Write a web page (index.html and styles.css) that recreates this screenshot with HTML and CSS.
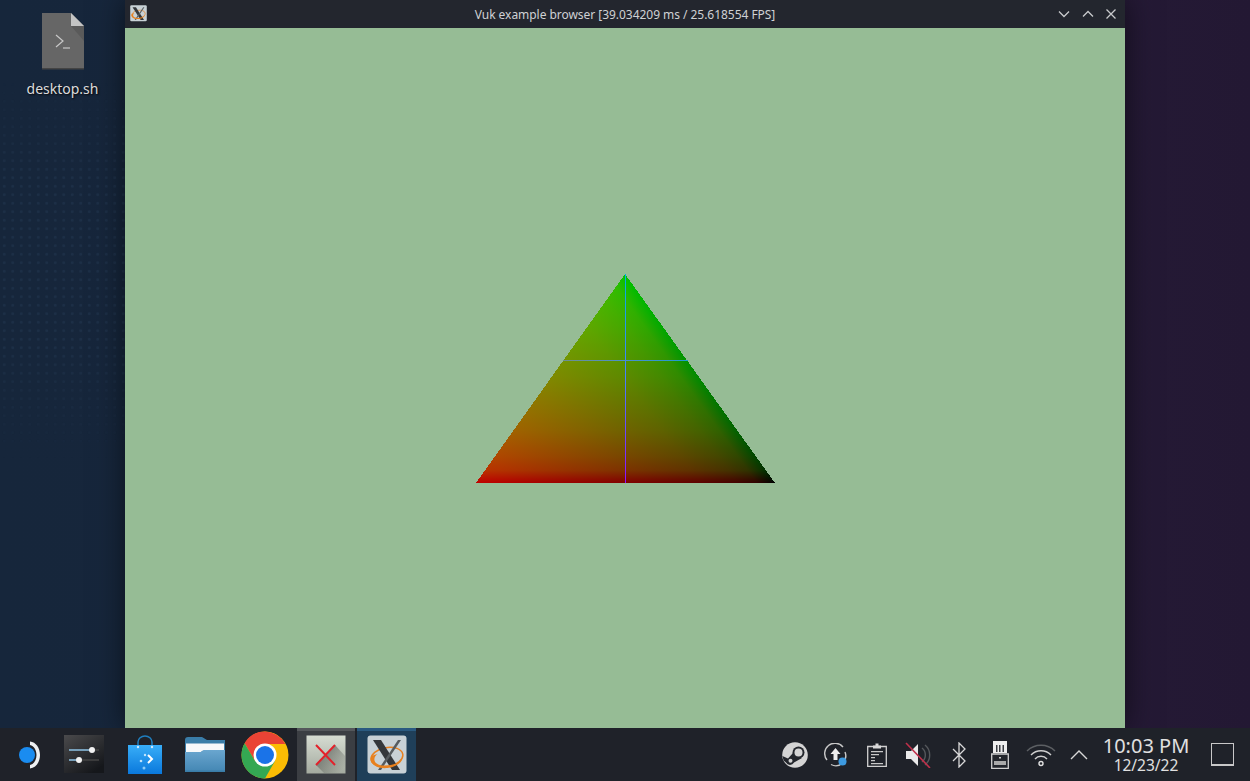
FILE: index.html
```html
<!DOCTYPE html>
<html lang="en">
<head>
  <meta charset="UTF-8" />
  <title>Vuk example browser</title>
  <link rel="stylesheet" href="styles.css">
</head>
<body>
  <!-- shared X server tile, used in the taskbar and on the title bar -->
  <svg class="defs" width="0" height="0">
    <symbol id="xorg" viewBox="0 0 40 40">
      <rect x="0.5" y="0.5" width="39" height="38" rx="3" fill="#c8d1d6" />
      <ellipse cx="20" cy="22" rx="16" ry="9.500" fill="none" stroke="#e8801e" stroke-width="1.500" transform="rotate(-10 20 22)" />
      <path d="M6 5h8l19 30h-8z" fill="#34373b" />
      <path d="M31 5h3L14 35h-3z" fill="#565b5f" />
      <path d="M3.500 24c0 6 8 10 17 9s14-5 15-10c-2 4-8 7-15 7.500s-12-1-13-5c-.5-2.500.5-4.500 3-6.500-4 1-7 2-7 5z" fill="#e8801e" />
    </symbol>
  </svg>

  <main class="desktop">
    <div class="desktop-file">
      <svg class="file-icon" width="44" height="57" viewBox="0 0 44 57">
        <path d="M1 0h29l13 13v43H1z" fill="#666" />
        <path d="M1 55h42v1.500H1z" fill="#444" />
        <path d="M30 13h13v15z" fill="#5a5a5a" />
        <path d="M30 0l13 13H30z" fill="#c4c4c4" />
        <path d="M15 22l7 6-7 6" fill="none" stroke="#c8c8c8" stroke-width="1.200" />
        <path d="M22 35h7" stroke="#c8c8c8" stroke-width="1.200" />
      </svg>
      <span class="file-name">desktop.sh</span>
    </div>

    <section class="window">
      <header class="titlebar">
        <svg class="title-icon" width="17" height="17"><use href="#xorg" /></svg>
        <span class="title-text">Vuk example browser [39.034209 ms / 25.618554 FPS]</span>
        <div class="title-buttons">
          <svg width="12" height="8" viewBox="0 0 12 8"><path d="M1 1.500l5 5 5-5" /></svg>
          <svg width="12" height="8" viewBox="0 0 12 8"><path d="M1 6.500l5-5 5 5" /></svg>
          <svg width="12" height="12" viewBox="0 0 12 12"><path d="M1.500 1.500l9 9M10.500 1.500l-9 9" /></svg>
        </div>
      </header>
      <div class="viewport">
        <svg class="triangle" width="300" height="211" viewBox="0 0 300 211">
          <defs>
            <!-- stops follow the sRGB curve, the app interpolates in linear light -->
            <linearGradient id="red" gradientUnits="userSpaceOnUse" x1="1" y1="210" x2="198.300" y2="68.400">
              <stop offset="0" stop-color="#c00000" />
              <stop offset="0.25" stop-color="#a00000" />
              <stop offset="0.5" stop-color="#800000" />
              <stop offset="0.75" stop-color="#5e0000" />
              <stop offset="0.875" stop-color="#440000" />
              <stop offset="0.94" stop-color="#300000" />
              <stop offset="1" stop-color="#000" />
            </linearGradient>
            <linearGradient id="green" gradientUnits="userSpaceOnUse" x1="0" y1="1" x2="0" y2="210">
              <stop offset="0" stop-color="#00c300" />
              <stop offset="0.25" stop-color="#00a800" />
              <stop offset="0.5" stop-color="#008800" />
              <stop offset="0.75" stop-color="#006200" />
              <stop offset="0.875" stop-color="#004600" />
              <stop offset="0.94" stop-color="#003200" />
              <stop offset="1" stop-color="#000" />
            </linearGradient>
            <linearGradient id="stem" gradientUnits="userSpaceOnUse" x1="0" y1="1" x2="0" y2="210">
              <stop offset="0" stop-color="#00b0e0" />
              <stop offset="0.5" stop-color="#4a80ff" />
              <stop offset="1" stop-color="#9010ff" />
            </linearGradient>
            <linearGradient id="bar" gradientUnits="userSpaceOnUse" x1="88" y1="0" x2="213" y2="0">
              <stop offset="0" stop-color="#6f8f90" />
              <stop offset="0.5" stop-color="#4a90d0" />
              <stop offset="1" stop-color="#1f9ad0" />
            </linearGradient>
          </defs>
          <g class="blend">
            <polygon points="150,1 1,210 300,210" fill="url(#red)" shape-rendering="crispEdges" />
            <polygon class="add" points="150,1 1,210 300,210" fill="url(#green)" shape-rendering="crispEdges" />
          </g>
          <rect x="150" y="1" width="1" height="209" fill="url(#stem)" />
          <rect x="88" y="87" width="125" height="1" fill="url(#bar)" />
        </svg>
      </div>
    </section>
  </main>

  <footer class="taskbar">
    <div class="launcher">
      <svg width="28" height="32" viewBox="0 0 28 32">
        <path d="M16 2.500C22 3 26 9 26 16s-4 13-10 13.500V26c4-1 6.500-5 6.500-10S20 7 16 6z" fill="#eef0f2" />
        <circle cx="13" cy="16" r="8" fill="#1a8cf0" />
      </svg>
    </div>
    <div class="launcher launcher-sliders">
      <svg width="40" height="39" viewBox="0 0 40 39">
        <defs>
          <linearGradient id="panel" x1="0" y1="0" x2="0.700" y2="1">
            <stop offset="0" stop-color="#4a4a4c" />
            <stop offset="1" stop-color="#15171b" />
          </linearGradient>
        </defs>
        <rect width="40" height="38" fill="url(#panel)" />
        <path d="M5 15h23M5 25h10" stroke="#8fc3e6" stroke-width="1.500" />
        <path d="M28 15h7M15 25h20" stroke="#444" stroke-width="1.500" />
        <circle cx="28" cy="15" r="3" fill="#f2f2f2" />
        <circle cx="15" cy="25" r="3" fill="#f2f2f2" />
      </svg>
    </div>
    <div class="launcher">
      <svg width="36" height="40" viewBox="0 0 36 40">
        <defs>
          <linearGradient id="bag" x1="0" y1="0" x2="0" y2="1">
            <stop offset="0" stop-color="#38aef8" />
            <stop offset="1" stop-color="#0a78dc" />
          </linearGradient>
        </defs>
        <path d="M11 11V7a7 6 0 0 1 14 0v4" fill="none" stroke="#1f7fc0" stroke-width="1.500" />
        <path d="M1 10h34v29H1z" fill="url(#bag)" />
        <circle cx="11" cy="12" r="1.200" fill="#cfe8fa" />
        <circle cx="25" cy="12" r="1.200" fill="#cfe8fa" />
        <path d="M21 20l4 4-4 4" fill="none" stroke="#fff" stroke-width="2" />
        <circle cx="18" cy="20" r="1.200" fill="#bfe3fb" />
        <circle cx="14" cy="26" r="1.300" fill="#bfe3fb" />
        <circle cx="17" cy="33" r="1.500" fill="#8ccdf7" />
      </svg>
    </div>
    <div class="launcher">
      <svg width="40" height="35" viewBox="0 0 40 35">
        <defs>
          <linearGradient id="folder" x1="0" y1="0" x2="0" y2="1">
            <stop offset="0" stop-color="#6aa6cf" />
            <stop offset="1" stop-color="#4386b3" />
          </linearGradient>
        </defs>
        <path d="M0 3q0-3 3-3h14l5 3h18v32H0z" fill="#3a7da8" />
        <path d="M1 6.500h38v7H18l-3 2H1z" fill="#f6f8fa" />
        <path d="M0 15h16l3-2h21v20q0 2-2 2H2q-2 0-2-2z" fill="url(#folder)" />
        <path d="M0 33.500h40V35H0z" fill="#3a7da8" />
      </svg>
    </div>
    <div class="launcher">
      <svg width="48" height="48" viewBox="0 0 48 48">
        <circle cx="24" cy="24" r="23.500" fill="#fbbc04" />
        <path d="M24 .5A23.500 23.500 0 0 0 3.600 12.300L14 30 24 13h20.400A23.500 23.500 0 0 0 24 .5z" fill="#ea4335" />
        <path d="M3.600 12.300A23.500 23.500 0 0 0 24 47.500L34 30H14z" fill="#34a853" />
        <circle cx="24" cy="24" r="11.500" fill="#fff" />
        <circle cx="24" cy="24" r="9" fill="#1a73e8" />
      </svg>
    </div>
    <div class="task task-x">
      <svg width="40" height="39" viewBox="0 0 40 39">
        <defs>
          <linearGradient id="tile" x1="0" y1="0" x2="0" y2="1">
            <stop offset="0" stop-color="#d6dcd2" />
            <stop offset="1" stop-color="#a4aa9f" />
          </linearGradient>
          <linearGradient id="cast" x1="0.100" y1="0.100" x2="0.900" y2="0.900">
            <stop offset="0" stop-color="#4a4d48" stop-opacity="0.75" />
            <stop offset="1" stop-color="#4a4d48" stop-opacity="0" />
          </linearGradient>
        </defs>
        <rect x="0.500" y="0.500" width="39" height="38" fill="url(#tile)" />
        <path d="M29 10l10 11v17H18L10 30z" fill="url(#cast)" />
        <path d="M10 10l19 20M29 10L10 30" stroke="#e3202a" stroke-width="2" />
      </svg>
    </div>
    <div class="task task-xorg">
      <svg width="40" height="40"><use href="#xorg" /></svg>
    </div>

    <div class="tray">
      <div class="tray-item">
        <svg width="26" height="26" viewBox="0 0 26 26">
          <circle cx="13" cy="13" r="12.800" fill="#d4d4d4" />
          <path d="M.4 14L6 16.500 11 11l9 5-8 4.500A4.500 4.500 0 0 1 4 20.500L1.600 18.500z" fill="#23262c" />
          <circle cx="16.500" cy="10.500" r="6" fill="#23262c" />
          <circle cx="16.500" cy="10.500" r="4" fill="#d4d4d4" />
          <circle cx="8.500" cy="18.800" r="2" fill="#d4d4d4" />
        </svg>
      </div>
      <div class="tray-item">
        <svg width="24" height="24" viewBox="0 0 24 24">
          <path d="M3 17A10 10 0 0 1 19 4M21 9a10 10 0 0 1-14 12.500" fill="none" stroke="#c8c8c8" stroke-width="1.400" />
          <path d="M11.500 5l5 6h-3v6h-4v-6h-3z" fill="#eee" />
          <circle cx="18.500" cy="18.500" r="4" fill="#3d9ae0" />
        </svg>
      </div>
      <div class="tray-item">
        <svg width="20" height="24" viewBox="0 0 20 24">
          <path d="M.7 3.500h18.600v20H.7z" fill="none" stroke="#d0d0d0" stroke-width="1.300" />
          <path d="M6 2.500h2.500V.5h3v2H14v3H6z" fill="#d8d8d8" />
          <path d="M4 8h12v1.300H4zM4 11h8v1.300H4zM4 14h4v1.300H4zM4 17h4v1.300H4zM4 20h12v1.300H4z" fill="#c8c8c8" />
        </svg>
      </div>
      <div class="tray-item">
        <svg width="26" height="26" viewBox="0 0 26 26">
          <path d="M1 9h5l7-7v22l-7-7H1z" fill="#eaeaea" />
          <path d="M17 6a9 9 0 0 1 0 14M20 3a13 13 0 0 1 0 20" fill="none" stroke="#55585c" stroke-width="1.400" />
          <path d="M1 1l24 25" stroke="#c0304a" stroke-width="1.600" />
        </svg>
      </div>
      <div class="tray-item">
        <svg width="14" height="26" viewBox="0 0 14 26">
          <path d="M1 7l12 12-6 6V1l6 6L1 19" fill="none" stroke="#d8d8d8" stroke-width="1.300" />
        </svg>
      </div>
      <div class="tray-item">
        <svg width="18" height="28" viewBox="0 0 18 28">
          <path d="M2 0h14v12H2z" fill="#eee" />
          <path d="M5 4h1.500v7H5zM8 4h1.500v7H8zM11.500 4H13v7h-1.500z" fill="#3a3d42" />
          <path d="M.7 13h16.600v14.300H.7z" fill="#23262c" stroke="#d0d0d0" stroke-width="1.300" />
          <path d="M3 20h12v4H3z" fill="#aaa" />
          <path d="M8 16h2v1.500H8z" fill="#ccc" />
        </svg>
      </div>
      <div class="tray-item">
        <svg width="30" height="24" viewBox="0 0 30 24">
          <path d="M1 8a20 20 0 0 1 28 0" fill="none" stroke="#5c5f63" stroke-width="1.400" />
          <path d="M5 12a14 14 0 0 1 20 0M9 16a8 8 0 0 1 12 0" fill="none" stroke="#d0d0d0" stroke-width="1.400" />
          <circle cx="15" cy="20.500" r="2" fill="none" stroke="#e0e0e0" stroke-width="1.400" />
        </svg>
      </div>
      <div class="tray-arrow">
        <svg width="18" height="11" viewBox="0 0 18 11"><path d="M1 10l8-8 8 8" fill="none" stroke="#d8d8d8" stroke-width="1.400" /></svg>
      </div>
      <div class="clock">
        <span class="clock-time">10:03 PM</span>
        <span class="clock-date">12/23/22</span>
      </div>
      <div class="show-desktop"></div>
    </div>
  </footer>
</body>
</html>
```

FILE: styles.css
```css
* {
  box-sizing: border-box;
}
html, body {
  height: 100%;
}
body {
  margin: 0;
  font-family: 'Noto Sans', sans-serif;
  display: flex;
  flex-direction: column;
  overflow: hidden;
  background: #1f2229;
}
svg {
  display: block;
  flex: none;
}
.defs {
  position: absolute;
}
.desktop {
  position: relative;
  height: 728px;
  background: linear-gradient(90deg, #16263b 0%, #17263c 30%, #1e1d37 62%, #251a36 85%, #231833 100%);
  overflow: hidden;
}
/* faint dot grid of the wallpaper */
.desktop::before {
  content: "";
  position: absolute;
  left: 0;
  top: 80px;
  width: 125px;
  height: 380px;
  background-image: radial-gradient(circle, rgba(90, 130, 170, 0.1) 1.2px, transparent 1.8px);
  background-size: 8.500px 8.500px;
  -webkit-mask-image: linear-gradient(180deg, transparent, #000 25%, #000 70%, transparent);
}
.desktop-file {
  position: absolute;
  left: 12.500px;
  top: 13px;
  width: 100px;
  display: flex;
  flex-direction: column;
  align-items: center;
  gap: 10px;
}
.file-name {
  font-size: 14px;
  line-height: 17px;
  color: #dcdcdc;
  text-shadow: 1px 1px 2px rgba(0, 0, 0, 0.9);
}
.window {
  position: absolute;
  left: 125px;
  top: 0;
  width: 1000px;
  height: 728px;
  display: flex;
  flex-direction: column;
  box-shadow: 0 0 28px rgba(0, 0, 0, 0.55);
}
.titlebar {
  position: relative;
  height: 28px;
  flex: none;
  display: flex;
  align-items: center;
  justify-content: center;
  background: #23262e;
}
.title-icon {
  position: absolute;
  left: 5px;
  top: 5px;
}
.title-text {
  font-size: 12px;
  letter-spacing: -0.04px;
  color: #cfd1d4;
}
.title-buttons {
  position: absolute;
  right: 8px;
  top: 8px;
  display: flex;
  align-items: center;
  gap: 11.500px;
}
.title-buttons path {
  fill: none;
  stroke: #c8cacc;
  stroke-width: 1.300;
}
.viewport {
  flex: 1;
  display: flex;
  align-items: center;
  justify-content: center;
  background: #96bc95;
}
.blend {
  isolation: isolate;
}
.add {
  mix-blend-mode: plus-lighter;
}
.taskbar {
  height: 53px;
  flex: none;
  display: flex;
  align-items: center;
  background: #1f2229;
  color: #e0e0e0;
}
.launcher {
  width: 60px;
  height: 53px;
  display: flex;
  align-items: center;
  justify-content: center;
}
.launcher:first-child {
  width: 55px;
}
.launcher-sliders svg {
  margin-right: 3px;
}
.task {
  height: 53px;
  display: flex;
  align-items: center;
  justify-content: center;
  padding-bottom: 3px;
}
.task-x {
  width: 58px;
  margin-left: 2px;
  background: #3b3e43;
  border-top: 3px solid #54575b;
}
.task-xorg {
  width: 59px;
  margin-left: 2px;
  background: #1f3f59;
  border-top: 3px solid #2a5a80;
}
.tray {
  margin-left: auto;
  display: flex;
  align-items: center;
  padding-right: 16px;
}
.tray-item {
  width: 41px;
  height: 53px;
  display: flex;
  align-items: center;
  justify-content: center;
}
.tray-arrow {
  width: 35px;
  display: flex;
  justify-content: center;
}
.clock {
  width: 90px;
  margin-left: 5px;
  display: flex;
  flex-direction: column;
  align-items: center;
  white-space: nowrap;
}
.clock-time {
  font-size: 20px;
  line-height: 22px;
}
.clock-date {
  font-size: 15.500px;
  line-height: 17px;
}
.show-desktop {
  width: 23px;
  height: 23px;
  margin-left: 20px;
  border: 1.500px solid #c8c8c8;
  border-bottom-width: 2.500px;
}
```
